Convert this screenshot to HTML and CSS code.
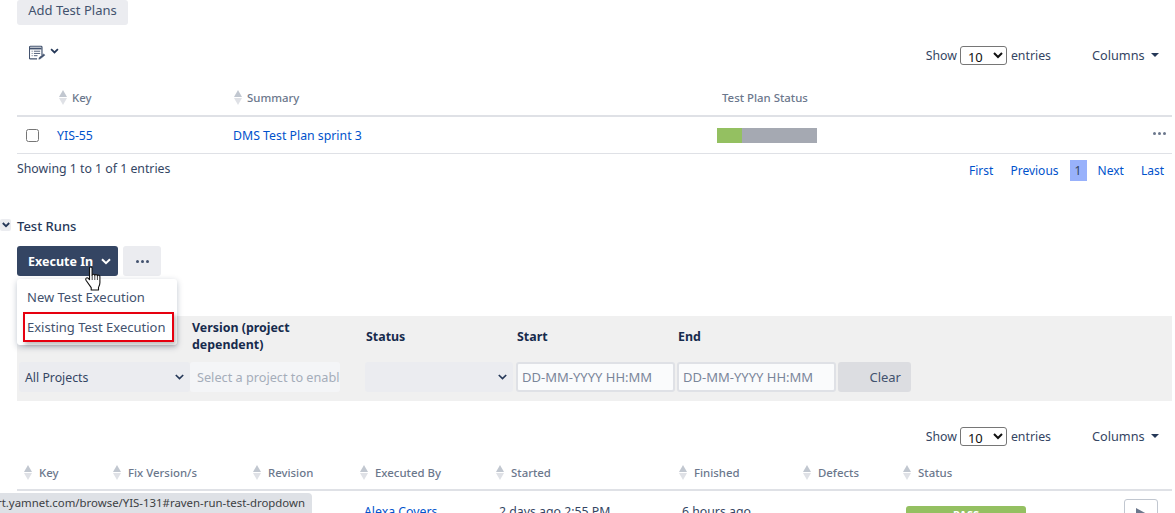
FILE: index.html
```html
<!DOCTYPE html>
<html lang="en">
<head>
<meta charset="utf-8">
<title>Test Runs</title>
<link rel="stylesheet" href="styles.css">
</head>
<body>
<div class="page">
  <section class="plans">
    <button class="btn add-plans">Add Test Plans</button>
    <div class="toolbar toolbar-plans">
      <span class="list-tool">
        <svg width="17" height="16" viewBox="0 0 19 17" fill="none" stroke="#42526e"><path d="M14.5 11V2a1 1 0 0 0-1-1h-12a1 1 0 0 0-1 1v12a1 1 0 0 0 1 1H9" stroke-width="1.3"/><path d="M1 3.5h13" stroke-width="2"/><path d="M3 6.500h1M3 9h1M3 11.500h1M5.500 6.500h7M5.500 9h7M5.500 11.500h4" stroke-width="1"/><path d="M11 15.500l.5-2 5-4 1.200 1.400-5 4z" fill="#42526e" stroke-width=".6"/></svg>
        <svg class="tool-caret" width="9" height="6" viewBox="0 0 10 7" fill="none" stroke="#253858" stroke-width="2"><path d="M1 1.200l4 4 4-4"/></svg>
      </span>
      <div class="show"><span>Show</span><select class="size"><option>10</option></select><span>entries</span></div>
      <span class="columns">Columns <i class="caret"></i></span>
    </div>
    <div class="row head plans-grid">
      <span></span>
      <span class="th"><i class="sort"></i>Key</span>
      <span class="th"><i class="sort"></i>Summary</span>
      <span class="th status-head">Test Plan Status</span>
    </div>
    <div class="row body plans-grid">
      <span class="check"><input type="checkbox"></span>
      <a class="link" href="#">YIS-55</a>
      <a class="link" href="#">DMS Test Plan sprint 3</a>
      <span class="progress"><i class="done"></i><i class="rest"></i></span>
      <span class="dots-cell"><i class="dot"></i><i class="dot"></i><i class="dot"></i></span>
    </div>
    <div class="foot">
      <span>Showing 1 to 1 of 1 entries</span>
      <nav class="pager"><a href="#">First</a><a href="#">Previous</a><a class="cur" href="#">1</a><a href="#">Next</a><a href="#">Last</a></nav>
    </div>
  </section>

  <section class="runs">
    <h3 class="runs-title"><span class="collapse"><svg width="8" height="6" viewBox="0 0 8 6" fill="none" stroke="#253858" stroke-width="1.8"><path d="M.8 1l3.200 3.200L7.200 1"/></svg></span>Test Runs</h3>
    <div class="actions">
      <button class="btn primary">Execute In<svg width="10" height="7" viewBox="0 0 10 7" fill="none" stroke="#fff" stroke-width="2"><path d="M1 1.200l4 4 4-4"/></svg></button>
      <button class="btn more"><i class="dot dark"></i><i class="dot dark"></i><i class="dot dark"></i></button>
    </div>
    <div class="filters">
      <div class="f f-project">
        <span class="label"></span>
        <div class="control select-like"><span>All Projects</span><svg width="9" height="6" viewBox="0 0 9 6" fill="none" stroke="#253858" stroke-width="1.7"><path d="M.8 1l3.700 3.500L8.200 1"/></svg></div>
      </div>
      <div class="f f-version">
        <span class="label">Version (project dependent)</span>
        <div class="control disabled"><span>Select a project to enable</span></div>
      </div>
      <div class="f f-status">
        <span class="label">Status</span>
        <div class="control select-like empty"><svg width="9" height="6" viewBox="0 0 9 6" fill="none" stroke="#253858" stroke-width="1.7"><path d="M.8 1l3.700 3.500L8.200 1"/></svg></div>
      </div>
      <div class="f f-date">
        <span class="label">Start</span>
        <div class="control date">DD-MM-YYYY HH:MM</div>
      </div>
      <div class="f f-date">
        <span class="label">End</span>
        <div class="control date">DD-MM-YYYY HH:MM</div>
      </div>
      <div class="f f-clear">
        <span class="label"></span>
        <button class="control clear">Clear</button>
      </div>
    </div>
    <div class="toolbar toolbar-runs">
      <div class="show"><span>Show</span><select class="size"><option>10</option></select><span>entries</span></div>
      <span class="columns">Columns <i class="caret"></i></span>
    </div>
    <div class="row head runs-grid">
      <span class="th"><i class="sort"></i>Key</span>
      <span class="th"><i class="sort"></i>Fix Version/s</span>
      <span class="th"><i class="sort"></i>Revision</span>
      <span class="th"><i class="sort"></i>Executed By</span>
      <span class="th"><i class="sort"></i>Started</span>
      <span class="th"><i class="sort"></i>Finished</span>
      <span class="th"><i class="sort"></i>Defects</span>
      <span class="th"><i class="sort"></i>Status</span>
    </div>
    <div class="row runs-grid run-row">
      <span></span><span></span><span></span>
      <a class="link" href="#">Alexa Covers</a>
      <span>2 days ago 2:55 PM</span>
      <span>6 hours ago</span>
      <span></span>
      <span class="pass-cell"><span class="pass">PASS</span><span class="play"><i></i></span></span>
    </div>
  </section>

  <div class="menu">
    <a href="#">New Test Execution</a>
    <a href="#">Existing Test Execution</a>
  </div>
  <div class="highlight"></div>
  <svg class="hand" width="20" height="26" viewBox="0 0 20 26"><path d="M5.500 2.200c0-1.600 2.600-1.600 2.600 0v7.200c.3-1.500 2.600-1.400 2.700.1.3-1.300 2.500-1.200 2.600.3.4-1 2.400-.8 2.500.7v6.200c0 2-.7 3.200-1.400 4.700v2.600H7.200v-2.400L2 14.200c-1.100-1.800 1-3.200 2.300-1.800l1.200 1.300z" fill="#fff" stroke="#111" stroke-width="1.100" stroke-linejoin="round"/><path d="M8.200 9.400v4.600M10.800 9.600v4.400M13.400 10v4" stroke="#111" stroke-width=".8" fill="none"/></svg>
  <div class="status-url"><span>rt.yamnet.com/browse/YIS-131#raven-run-test-dropdown</span></div>
</div>
</body>
</html>
```
FILE: styles.css
```css
* { box-sizing: border-box; }
html, body { margin: 0; padding: 0; background: #fff; }
body { font-family: "Noto Sans", "Open Sans", sans-serif; font-size: 12.3px; color: #344563; }
.page { position: relative; width: 1175px; height: 513px; overflow: hidden; padding-left: 17px; padding-right: 3px; }
a { color: #0052cc; text-decoration: none; }
.btn { border: 0; border-radius: 3px; font: inherit; display: inline-flex; align-items: center; justify-content: center; padding: 0; }
.add-plans { display: flex; width: 111px; height: 25px; background: #ebecf0; color: #42526e; padding-bottom: 6px; font-size: 13px; }

.toolbar { display: flex; align-items: center; }
.toolbar-plans { height: 20px; margin-top: 20px; }
.toolbar-runs { height: 20px; margin-top: 25px; justify-content: flex-end; }
.list-tool { display: flex; align-items: flex-start; gap: 4px; margin-left: 12px; margin-right: auto; height: 20px; }
.tool-caret { margin-top: 3px; }
.show { display: flex; align-items: center; gap: 3px; margin-right: 41px; }
.show .size + span { margin-left: 1px; }
.size { width: 47px; height: 19px; padding: 0 0 0 3px; font: 13px "Noto Sans", sans-serif; color: #111; background: #fff; border: 1px solid #767676; border-radius: 3px; }
.columns { display: inline-flex; align-items: center; gap: 6px; margin-right: 14px; width: 66px; white-space: nowrap; font-size: 12.7px; }
.caret { flex: none; width: 0; height: 0; border-left: 4px solid transparent; border-right: 4px solid transparent; border-top: 4px solid #253858; }

.row { display: grid; align-items: center; }
.head { border-bottom: 2px solid #dfe1e6; color: #6b778c; font-weight: 500; font-size: 11.4px; }
.th { display: flex; align-items: center; white-space: nowrap; }
.sort { position: relative; display: block; flex: none; width: 9px; height: 15px; margin-right: 6px; }
.sort::before, .sort::after { content: ""; position: absolute; left: 0; border-left: 4.500px solid transparent; border-right: 4.500px solid transparent; }
.sort::before { top: 0; border-bottom: 7px solid #c1c7d0; }
.sort::after { bottom: 0; border-top: 7px solid #dfe1e6; }
.plans-grid { grid-template-columns: 40px 176px 484px 435px 20px; }
.plans .head { height: 38px; margin-top: 14px; }
.plans .head .sort { margin-right: 4px; }
.plans .head .th:nth-child(2) { margin-left: 2px; }
.plans .head .th:nth-child(3) { margin-left: 1px; }
.status-head { grid-column: 4; margin-left: 5px; }
.body { height: 37px; border-bottom: 1px solid #dfe1e6; }
.check { display: flex; padding-left: 9px; }
.check input { width: 13px; height: 13px; margin: 0; }
.progress { display: flex; width: 100px; height: 15px; }
.done { width: 25px; background: #94c061; }
.rest { width: 75px; background: #a5a9b2; }
.dots-cell { display: flex; gap: 2px; justify-content: flex-end; padding-bottom: 4px; padding-right: 6px; margin-left: -10px; }
.dot { display: block; flex: none; width: 3px; height: 3px; border-radius: 50%; background: #6b778c; }
.dot.dark { background: #42526e; }

.foot { display: flex; justify-content: space-between; align-items: center; height: 29px; }
.pager { display: flex; align-items: center; margin-right: 8px; margin-top: 3px; font-size: 12px; }
.pager a { display: block; height: 21px; line-height: 21px; margin-left: 17px; }
.pager a.cur { width: 17px; margin-left: 11px; margin-right: -6px; text-align: center; background: #98b1fb; color: #344563; }

.runs-title { position: relative; margin: 35px 0 0; font: 500 13px/16px "Noto Sans", sans-serif; color: #253858; height: 16px; }
.collapse { position: absolute; left: -17px; top: 1px; width: 11px; height: 12px; background: #ebecf0; border-radius: 2px; display: flex; align-items: center; justify-content: center; }
.actions { display: flex; gap: 5px; margin-top: 12px; }
.primary { width: 101px; height: 30px; background: #344563; color: #fff; font-weight: 700; gap: 8px; font-size: 12.500px; justify-content: flex-start; padding-left: 11px; }
.more { width: 38px; height: 30px; background: #ebecf0; gap: 2px; }

.filters { display: flex; align-items: flex-start; height: 85px; margin-top: 40px; background: #f0f0f0; padding-left: 2px; }
.f { display: flex; flex-direction: column; }
.label { display: flex; align-items: center; height: 40px; margin-bottom: 6px; font-weight: 700; color: #172b4d; line-height: 17px; font-size: 12.400px; }
.control { height: 30px; border-radius: 3px; display: flex; align-items: center; }
.f-project { width: 171px; }
.select-like { background: #ebecf0; padding: 0 6px; justify-content: space-between; color: #344563; }
.empty { justify-content: flex-end; }
.f-version { width: 175px; padding-right: 25px; }
.f-version .label { padding-left: 2px; }
.disabled { background: #f4f5f7; color: #a5adba; padding-left: 7px; overflow: hidden; white-space: nowrap; font-size: 12.700px; }
.f-status { width: 151px; padding-right: 3px; }
.f-status .label, .f-date .label { padding-left: 1px; }
.f-date { width: 161px; padding-right: 2px; }
.date { background: #fafbfc; border: 2px solid #dfe1e6; color: #7a869a; padding-left: 4px; white-space: nowrap; font-size: 13px; }
.f-clear { width: 73px; }
.clear { width: 73px; border: 0; background: #dcdde1; color: #42526e; font: inherit; font-size: 13px; justify-content: flex-end; padding-right: 10px; }

.runs-grid { grid-template-columns: 89px 140px 107px 136px 183px 124px 100px 1fr; padding-left: 7px; }
.runs .head { height: 45px; padding-top: 9px; }
.run-row { align-items: start; padding-top: 12px; color: #344563; }
.run-row .link { margin-left: 4px; }
.run-row > span:nth-child(5) { margin-left: 3px; }
.run-row > span:nth-child(6) { margin-left: 3px; }
.pass-cell { position: relative; display: block; height: 30px; margin-top: 3px; }
.pass { display: block; margin-left: 3px; width: 120px; height: 22px; background: #94c061; border-radius: 3px; color: #fff; font-size: 11px; line-height: 18px; font-weight: 700; text-align: center; }
.play { position: absolute; left: 221px; top: -7px; width: 34px; height: 30px; background: #fff; border: 1px solid #c1c7d0; border-radius: 3px; }
.play i { position: absolute; left: 11px; top: 8px; width: 0; height: 0; border-left: 11px solid #6b778c; border-top: 6px solid transparent; border-bottom: 6px solid transparent; }

.menu { position: absolute; left: 17px; top: 279px; width: 160px; height: 66px; padding-top: 3px; background: #fff; border-radius: 3px; box-shadow: 0 2px 6px rgba(9,30,66,.25); }
.menu a { display: block; height: 30px; line-height: 30px; padding-left: 10px; color: #42526e; white-space: nowrap; font-size: 13px; }
.highlight { position: absolute; left: 23px; top: 312px; width: 151px; height: 30px; border: 2px solid #e6000f; box-shadow: 2px 3px 4px rgba(0,0,0,.25); }
.hand { position: absolute; left: 84px; top: 266px; }
.status-url { position: absolute; left: 0; top: 493px; width: 312px; height: 20px; padding-right: 7px; background: #dee1e6; border-top-right-radius: 4px; font-size: 11.400px; line-height: 20px; color: #3c4043; display: flex; justify-content: flex-end; white-space: nowrap; overflow: hidden; }
```
